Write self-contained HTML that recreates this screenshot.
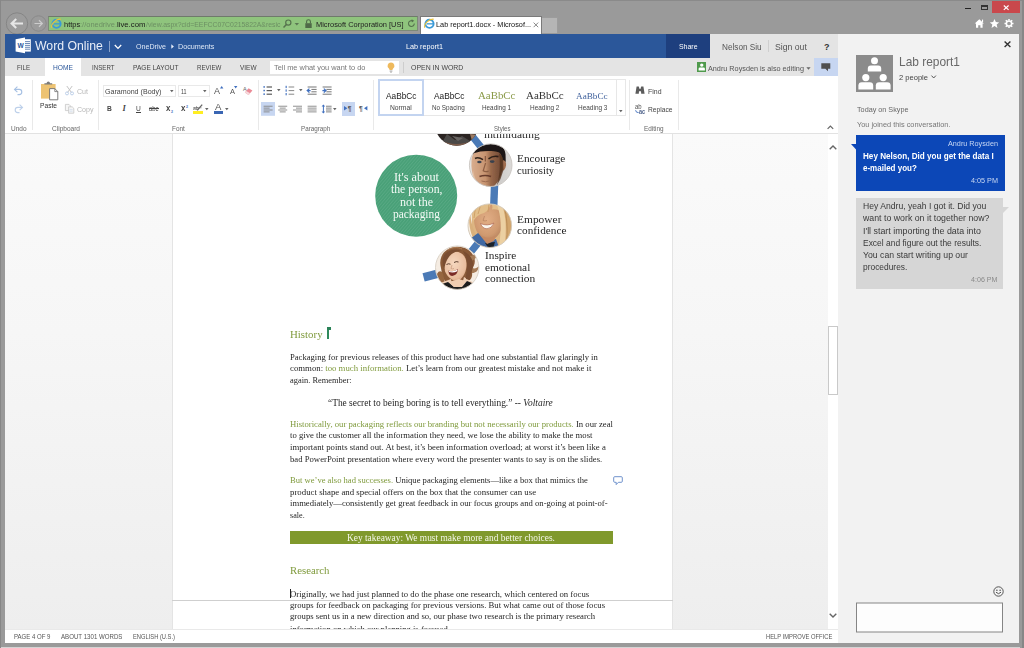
<!DOCTYPE html>
<html lang="en"><head><meta charset="utf-8"><title>Lab report1.docx - Microsoft Word Online</title>
<style>
*{margin:0;padding:0;box-sizing:border-box}
html,body{width:1024px;height:648px;overflow:hidden;background:#9a9a9a}
body{position:relative;font-family:"Liberation Sans",sans-serif}
.t{position:absolute;white-space:nowrap;transform-origin:0 50%;line-height:1;font-family:"Liberation Sans",sans-serif}
.f{font-family:"Liberation Serif",serif}
.r{position:absolute}
svg{position:absolute;overflow:visible}
</style></head><body>
<!-- browser chrome -->
<div class="r" style="left:0px;top:0px;width:1024px;height:648px;background:#9a9a9a;"></div>
<div class="r" style="left:0px;top:0px;width:1024px;height:1px;background:#8a8a8a;"></div>
<div class="r" style="left:0px;top:0px;width:1.2px;height:648px;background:#878787;"></div>
<div class="r" style="left:1022.4px;top:0px;width:1.6px;height:648px;background:#878787;"></div>
<div class="r" style="left:1.2px;top:646.9px;width:1019px;height:1.1px;background:#d4d4d4;"></div>
<svg style="left:5px;top:10px" width="46" height="27" viewBox="5 10 46 27"><circle cx="17" cy="23.5" r="10.7" fill="#9c9c9c" stroke="#828282" stroke-width="0.9"/><path d="M23 23.5H12M16.2 19l-4.6 4.5 4.6 4.5" fill="none" stroke="#e6e6e6" stroke-width="2.1"/><circle cx="38.5" cy="23.5" r="7.7" fill="#9b9b9b" stroke="#858585" stroke-width="0.8"/><path d="M34.5 23.5h7.6M39 20.3l3.3 3.2-3.3 3.2" fill="none" stroke="#cdcdcd" stroke-width="1.2"/></svg>
<div class="r" style="left:48px;top:16px;width:370px;height:15px;background:#8fc47d;border:1px solid #7d8a78;border-top-color:#6f7a6b"></div>
<svg style="left:51px;top:18px" width="11" height="11" viewBox="0 0 11 11"><circle cx="5.5" cy="5.8" r="4.1" fill="none" stroke="#3a9ad8" stroke-width="1.9"/><rect x="3" y="5.2" width="6.5" height="1.3" fill="#3a9ad8"/><path d="M0.8 9.8C-0.5 6 5 0.5 9.8 1.2" fill="none" stroke="#e9c13a" stroke-width="1.1"/></svg>
<div class="t" style="left:63.60px;top:21px;font-size:8px;color:#1a1a1a;transform:scaleX(0.9341);">https</div>
<div class="t" style="left:80.00px;top:21px;font-size:8px;color:#6c8f63;transform:scaleX(0.9349);">://onedrive.</div>
<div class="t" style="left:117.00px;top:21px;font-size:8px;color:#1a1a1a;transform:scaleX(0.9680);">live.com</div>
<div class="t" style="left:145.60px;top:21px;font-size:8px;color:#6c8f63;transform:scaleX(0.8574);">/view.aspx?cid=EEFCC07C0215822A&amp;resic</div>
<svg style="left:282px;top:18px" width="32" height="12" viewBox="282 18 32 12"><circle cx="288.3" cy="22.6" r="2.6" fill="none" stroke="#56724e" stroke-width="1.2"/><path d="M286.4 24.6l-2.9 3" stroke="#56724e" stroke-width="1.5"/><path d="M294.6 23h4.4l-2.2 2.4z" fill="#5b7853"/><rect x="305.3" y="23.2" width="6.4" height="4.8" fill="#4f6a48"/><path d="M306.6 23.2v-1.6a1.9 1.9 0 0 1 3.8 0v1.6" fill="none" stroke="#4f6a48" stroke-width="1.1"/></svg>
<div class="t" style="left:316.00px;top:21px;font-size:8px;color:#222;transform:scaleX(0.9283);">Microsoft Corporation [US]</div>
<svg style="left:407px;top:19px" width="9" height="9" viewBox="0 0 9 9"><path d="M7.3 4.6A2.9 2.9 0 1 1 5.6 1.9" fill="none" stroke="#56724e" stroke-width="1.1"/><path d="M4.6 0.2l2.6 1.6-2.3 1.7z" fill="#56724e"/></svg>
<div class="r" style="left:420px;top:16px;width:122px;height:18px;background:#ffffff;border:1px solid #7a7a7a;border-bottom:none"></div>
<svg style="left:424px;top:18px" width="11" height="11" viewBox="0 0 11 11"><circle cx="5.5" cy="5.8" r="4.1" fill="none" stroke="#3a9ad8" stroke-width="1.9"/><rect x="3" y="5.2" width="6.5" height="1.3" fill="#3a9ad8"/><path d="M0.8 9.8C-0.5 6 5 0.5 9.8 1.2" fill="none" stroke="#e9c13a" stroke-width="1.1"/></svg>
<div class="t" style="left:436.00px;top:21px;font-size:8px;color:#111;transform:scaleX(0.9131);">Lab report1.docx - Microsof...</div>
<svg style="left:533px;top:22px" width="6" height="6" viewBox="0 0 6 6"><path d="M0.6 0.6l4.6 4.6M5.2 0.6L0.6 5.2" stroke="#8a8a8a" stroke-width="1"/></svg>
<div class="r" style="left:542px;top:17.4px;width:15.8px;height:16.1px;background:#b5b5b5;border:1px solid #9c9c9c;border-left:none;border-bottom:none"></div>
<div class="r" style="left:965px;top:8px;width:5.5px;height:1.4px;background:#222;"></div>
<div class="r" style="left:981px;top:4.5px;width:6.5px;height:5px;background:transparent;border:1px solid #333;border-top-width:2px"></div>
<div class="r" style="left:992px;top:1px;width:28px;height:12px;background:#c9484c;"></div>
<svg style="left:1003px;top:4.5px" width="6.4" height="5.4" viewBox="0 0 6.4 5.4"><path d="M0.8 0.5l4.8 4.4M5.6 0.5L0.8 4.9" stroke="#fff" stroke-width="1.15"/></svg>
<svg style="left:974px;top:18px" width="42" height="11" viewBox="974 18 42 11"><path d="M979.3 19.2l4.6 4.4h-1.3v4.2h-2.2v-2.6h-2.2v2.6h-2.2v-4.2h-1.3z" fill="#fff"/><rect x="982" y="19.6" width="1.1" height="2.4" fill="#fff"/><path d="M994.5 19l1.35 3.1 3.35 0.3-2.55 2.2 0.8 3.3-2.95-1.8-2.95 1.8 0.8-3.3-2.55-2.2 3.35-0.3z" fill="#fff"/><circle cx="1009" cy="23.5" r="2.6" fill="none" stroke="#fff" stroke-width="1.5"/><g stroke="#fff" stroke-width="1.5"><path d="M1009 19v1.6M1009 26.4V28M1004.5 23.5h1.6M1011.9 23.5h1.6M1005.8 20.3l1.1 1.1M1011.1 25.6l1.1 1.1M1012.2 20.3l-1.1 1.1M1006.9 25.6l-1.1 1.1"/></g></svg>
<!-- app header -->
<div class="r" style="left:5px;top:33.5px;width:661px;height:24.3px;background:#2b579a;"></div>
<div class="r" style="left:666px;top:33.5px;width:44px;height:24.3px;background:#1e3f7e;"></div>
<div class="r" style="left:710px;top:33.5px;width:128px;height:24.5px;background:#e4e4e4;"></div>
<svg style="left:15px;top:37px" width="17" height="17" viewBox="0 0 17 17"><rect x="8" y="2.2" width="7.8" height="12.4" fill="#fff"/><g stroke="#2b579a" stroke-width="0.7"><path d="M10 4.6h5M10 6.5h5M10 8.4h5M10 10.3h5M10 12.2h5"/></g><path d="M0.6 2.2L10 0.6v15.6L0.6 14.6z" fill="#fff"/></svg>
<div class="t" style="left:17.40px;top:43px;font-size:6.6px;color:#2b579a;font-weight:bold;">W</div>
<div class="t" style="left:35.00px;top:40px;font-size:12.2px;color:#e9eef7;transform:scaleX(1.0062);">Word Online</div>
<div class="r" style="left:109px;top:40.5px;width:1px;height:11px;background:#8aa3cb;"></div>
<svg style="left:114px;top:43.5px" width="8" height="6" viewBox="0 0 8 6"><path d="M0.8 1l3.2 3.4L7.2 1" fill="none" stroke="#fff" stroke-width="1.3"/></svg>
<div class="t" style="left:136.00px;top:43px;font-size:7.6px;color:#dfe8f6;transform:scaleX(0.9346);">OneDrive</div>
<svg style="left:170.6px;top:44px" width="3.2" height="5" viewBox="0 0 3.2 5"><path d="M0.300 0.300L2.900 2.500 0.300 4.700z" fill="#e8eefa"/></svg>
<div class="t" style="left:177.50px;top:43px;font-size:7.6px;color:#dfe8f6;transform:scaleX(0.9496);">Documents</div>
<div class="t" style="left:406.00px;top:43px;font-size:7.6px;color:#fff;transform:scaleX(0.9518);">Lab report1</div>
<div class="t" style="left:679.00px;top:43px;font-size:7.8px;color:#fff;transform:scaleX(0.8888);">Share</div>
<div class="t" style="left:722.40px;top:43px;font-size:9px;color:#555;transform:scaleX(0.9098);">Nelson Siu</div>
<div class="r" style="left:768px;top:40px;width:1px;height:12px;background:#cfcfcf;"></div>
<div class="t" style="left:775.00px;top:43px;font-size:9px;color:#555;transform:scaleX(0.9629);">Sign out</div>
<div class="t" style="left:824.00px;top:43px;font-size:9px;color:#333;font-weight:bold;">?</div>
<!-- ribbon tabs -->
<div class="r" style="left:5px;top:57.8px;width:833px;height:18.2px;background:#e4e4e4;"></div>
<div class="r" style="left:45px;top:57.8px;width:36px;height:18.2px;background:#ffffff;"></div>
<div class="t" style="left:17.00px;top:64px;font-size:7.6px;color:#444;transform:scaleX(0.8100);">FILE</div>
<div class="t" style="left:53.00px;top:64px;font-size:7.6px;color:#2b579a;transform:scaleX(0.8772);">HOME</div>
<div class="t" style="left:91.50px;top:64px;font-size:7.6px;color:#444;transform:scaleX(0.8113);">INSERT</div>
<div class="t" style="left:132.50px;top:64px;font-size:7.6px;color:#444;transform:scaleX(0.8665);">PAGE LAYOUT</div>
<div class="t" style="left:196.60px;top:64px;font-size:7.6px;color:#444;transform:scaleX(0.8139);">REVIEW</div>
<div class="t" style="left:239.50px;top:64px;font-size:7.6px;color:#444;transform:scaleX(0.8495);">VIEW</div>
<div class="r" style="left:270px;top:61px;width:128.5px;height:12.5px;background:#ffffff;"></div>
<div class="t" style="left:273.50px;top:64px;font-size:7.6px;color:#777;transform:scaleX(0.9757);">Tell me what you want to do</div>
<svg style="left:386.5px;top:61.5px" width="8" height="11" viewBox="0 0 8 11"><path d="M4 0.4a3.4 3.4 0 0 1 2.1 6.1c-0.5 0.5-0.6 0.9-0.6 1.5h-3c0-0.6-0.1-1-0.6-1.5A3.4 3.4 0 0 1 4 0.4z" fill="#eeb95c"/><rect x="2.6" y="8.6" width="2.8" height="0.9" fill="#9a9a9a"/><rect x="3.1" y="9.8" width="1.8" height="0.7" fill="#9a9a9a"/></svg>
<div class="r" style="left:403px;top:62px;width:1px;height:10.5px;background:#cdcdcd;"></div>
<div class="t" style="left:410.60px;top:64px;font-size:7.6px;color:#444;transform:scaleX(0.9125);">OPEN IN WORD</div>
<div class="r" style="left:696.5px;top:62.2px;width:9.5px;height:9.8px;background:#4f9a4c;"></div>
<svg style="left:696.5px;top:62.2px" width="9.5" height="9.8" viewBox="0 0 9.5 9.8"><circle cx="4.75" cy="3.1" r="1.7" fill="#fff"/><path d="M1.6 8.6V6.8q0-1.4 1.4-1.4h3.5q1.4 0 1.4 1.4v1.8z" fill="#fff"/></svg>
<div class="t" style="left:708.00px;top:65px;font-size:7.6px;color:#555;transform:scaleX(0.9548);">Andru Roysden is also editing</div>
<svg style="left:806px;top:66.6px" width="5" height="3" viewBox="0 0 5 3"><path d="M0.4 0.3h4.2L2.5 2.7z" fill="#666"/></svg>
<div class="r" style="left:814px;top:57.8px;width:24px;height:18.2px;background:#c7d6f1;"></div>
<svg style="left:821px;top:63px" width="10" height="9" viewBox="0 0 10 9"><path d="M0.3 0.3h9v5.4H7v2.6L4.4 5.7H0.3z" fill="#505050"/></svg>
<!-- ribbon body -->
<div class="r" style="left:5px;top:76px;width:833px;height:57px;background:#ffffff;"></div>
<div class="r" style="left:5px;top:133px;width:833px;height:1px;background:#e2e2e2;"></div>
<div class="r" style="left:32px;top:80px;width:1px;height:50px;background:#e9e9e9;"></div>
<div class="r" style="left:98px;top:80px;width:1px;height:50px;background:#e9e9e9;"></div>
<div class="r" style="left:257.5px;top:80px;width:1px;height:50px;background:#e9e9e9;"></div>
<div class="r" style="left:373px;top:80px;width:1px;height:50px;background:#e9e9e9;"></div>
<div class="r" style="left:629.4px;top:80px;width:1px;height:50px;background:#e9e9e9;"></div>
<div class="r" style="left:678.2px;top:80px;width:1px;height:50px;background:#e9e9e9;"></div>
<div class="t" style="left:10.50px;top:126px;font-size:6.8px;color:#666;transform:scaleX(0.9535);">Undo</div>
<div class="t" style="left:51.50px;top:126px;font-size:6.8px;color:#666;transform:scaleX(0.9620);">Clipboard</div>
<div class="t" style="left:172.00px;top:126px;font-size:6.8px;color:#666;transform:scaleX(0.9407);">Font</div>
<div class="t" style="left:300.70px;top:126px;font-size:6.8px;color:#666;transform:scaleX(0.9227);">Paragraph</div>
<div class="t" style="left:493.50px;top:126px;font-size:6.8px;color:#666;transform:scaleX(0.8911);">Styles</div>
<div class="t" style="left:644.00px;top:126px;font-size:6.8px;color:#666;transform:scaleX(0.9427);">Editing</div>
<svg style="left:13px;top:85px" width="11" height="28" viewBox="13 85 11 28"><path d="M15 89.4h4.2a2.6 2.6 0 0 1 0 5.2H17.5" fill="none" stroke="#a6c0e3" stroke-width="1.1"/><path d="M17.4 86.6l-2.9 2.8 2.9 2.8" fill="none" stroke="#a6c0e3" stroke-width="1.1"/><path d="M22 107.4h-4.2a2.6 2.6 0 0 0 0 5.2H19.5" fill="none" stroke="#bdd0ea" stroke-width="1.1"/><path d="M19.6 104.6l2.9 2.8-2.9 2.8" fill="none" stroke="#bdd0ea" stroke-width="1.1"/></svg>
<svg style="left:40px;top:81px" width="19" height="20" viewBox="40 81 19 20"><rect x="41" y="84" width="14.6" height="14.6" fill="#edc373"/><path d="M44.4 84.6h7.8v-1.4h-2.2a1.7 1.7 0 0 0-3.4 0h-2.2z" fill="#7b7b7b"/><path d="M49.6 88.6h5.2l3 3v8.2h-8.2z" fill="#fff" stroke="#6e6e6e" stroke-width="0.9"/><path d="M54.8 88.6v3h3" fill="none" stroke="#6e6e6e" stroke-width="0.8"/></svg>
<div class="t" style="left:40.00px;top:102px;font-size:8px;color:#333;transform:scaleX(0.8310);">Paste</div>
<svg style="left:64px;top:85px" width="11" height="30" viewBox="64 85 11 30"><path d="M66.8 86l4.6 6.4M72.2 86l-4.6 6.4" stroke="#c4c4c4" stroke-width="1"/><circle cx="67" cy="93.4" r="1.5" fill="none" stroke="#b7cbe6" stroke-width="0.9"/><circle cx="72" cy="93.4" r="1.5" fill="none" stroke="#b7cbe6" stroke-width="0.9"/><path d="M65.4 104.4h3.6l1.6 1.6v4.6h-5.2z" fill="#f6f6f6" stroke="#c6c6c6" stroke-width="0.8"/><path d="M68.6 106.8h3.6l1.6 1.6v4.8h-5.2z" fill="#f6f6f6" stroke="#c6c6c6" stroke-width="0.8"/><path d="M69.6 109.6h3M69.6 111.2h3" stroke="#c4d4ea" stroke-width="0.6"/></svg>
<div class="t" style="left:76.50px;top:88px;font-size:8px;color:#b8b8b8;transform:scaleX(0.8836);">Cut</div>
<div class="t" style="left:76.50px;top:106px;font-size:8px;color:#b8b8b8;transform:scaleX(0.8835);">Copy</div>
<div class="r" style="left:103px;top:84.5px;width:72.5px;height:12.5px;background:#fff;border:1px solid #e9e9e9"></div>
<div class="r" style="left:177.5px;top:84.5px;width:32px;height:12.5px;background:#fff;border:1px solid #e9e9e9"></div>
<div class="t" style="left:105.00px;top:88px;font-size:7.8px;color:#444;transform:scaleX(0.9114);">Garamond (Body)</div>
<div class="t" style="left:180.50px;top:88px;font-size:7.8px;color:#444;transform:scaleX(0.6916);">11</div>
<svg style="left:169.6px;top:90.3px" width="3.6" height="2.2" viewBox="0 0 3.6 2.2"><path d="M0 0h3.6L1.8 2.2z" fill="#666"/></svg>
<svg style="left:202.8px;top:90.3px" width="3.6" height="2.2" viewBox="0 0 3.6 2.2"><path d="M0 0h3.6L1.8 2.2z" fill="#666"/></svg>
<div class="t" style="left:214.20px;top:87px;font-size:8.6px;color:#555;transform:scaleX(1.0460);">A</div>
<svg style="left:219.6px;top:85.6px" width="3.4" height="2.4" viewBox="0 0 3.4 2.4"><path d="M0 2.4h3.4L1.7 0z" fill="#3f6fbf"/></svg>
<div class="t" style="left:229.60px;top:88px;font-size:7.2px;color:#555;transform:scaleX(1.0411);">A</div>
<svg style="left:233.8px;top:86px" width="3.4" height="2.4" viewBox="0 0 3.4 2.4"><path d="M0 0h3.4L1.7 2.4z" fill="#3f6fbf"/></svg>
<div class="t" style="left:243.00px;top:87px;font-size:5.6px;color:#666;">A</div>
<svg style="left:243px;top:87px" width="10" height="9" viewBox="0 0 10 9"><path d="M5.6 1.2L9.4 3.6 5.6 8 1.8 5.6z" fill="#ea8a96"/><path d="M1.8 5.6l1.5-1.7 3.8 2.4L5.6 8z" fill="#f6d9dc"/></svg>
<div class="t" style="left:107.00px;top:105px;font-size:8px;color:#444;font-weight:bold;transform:scaleX(0.8308);">B</div>
<div class="t f" style="left:122.60px;top:105px;font-size:8.4px;color:#444;font-weight:bold;font-style:italic;">I</div>
<div class="t" style="left:136.20px;top:105px;font-size:8px;color:#444;transform:scaleX(0.8308);">U</div>
<div class="r" style="left:136px;top:112px;width:5.4px;height:0.9px;background:#444;"></div>
<div class="t" style="left:149.00px;top:105px;font-size:7.2px;color:#444;transform:scaleX(0.8270);">abc</div>
<div class="r" style="left:148.6px;top:108.4px;width:10.4px;height:0.8px;background:#444;"></div>
<div class="t" style="left:165.60px;top:104px;font-size:8.6px;color:#444;font-weight:bold;transform:scaleX(0.9199);">x</div>
<div class="t" style="left:171.00px;top:111px;font-size:3.6px;color:#3f6fbf;font-weight:bold;">2</div>
<div class="t" style="left:180.60px;top:104px;font-size:8.6px;color:#444;font-weight:bold;transform:scaleX(0.9199);">x</div>
<div class="t" style="left:186.00px;top:106px;font-size:3.6px;color:#3f6fbf;font-weight:bold;">2</div>
<div class="t" style="left:193.40px;top:105px;font-size:6px;color:#555;transform:scaleX(0.8391);">ab</div>
<svg style="left:193px;top:104px" width="10" height="7" viewBox="0 0 10 7"><path d="M9.2 0.6L4.2 6.4" stroke="#666" stroke-width="1.3"/><path d="M0.6 3.8h8" stroke="#666" stroke-width="0.6"/></svg>
<div class="r" style="left:193px;top:111px;width:9.6px;height:2.8px;background:#ffee22;"></div>
<svg style="left:204.6px;top:108.2px" width="3.6" height="2.2" viewBox="0 0 3.6 2.2"><path d="M0 0h3.6L1.8 2.2z" fill="#666"/></svg>
<div class="t" style="left:214.60px;top:103px;font-size:9px;color:#555;transform:scaleX(1.0661);">A</div>
<div class="r" style="left:213.8px;top:111.4px;width:9.6px;height:2.4px;background:#3a66b3;"></div>
<svg style="left:225.4px;top:108.2px" width="3.6" height="2.2" viewBox="0 0 3.6 2.2"><path d="M0 0h3.6L1.8 2.2z" fill="#666"/></svg>
<svg style="left:262px;top:84px" width="74" height="34" viewBox="262 84 74 34"><rect x="263.4" y="86.2" width="1.5" height="1.5" fill="#3f6fbf"/><rect x="266.6" y="86.4" width="5.4" height="1.2" fill="#5a5a5a"/><rect x="263.4" y="89.8" width="1.5" height="1.5" fill="#3f6fbf"/><rect x="266.6" y="90.0" width="5.4" height="1.2" fill="#5a5a5a"/><rect x="263.4" y="93.4" width="1.5" height="1.5" fill="#3f6fbf"/><rect x="266.6" y="93.60000000000001" width="5.4" height="1.2" fill="#5a5a5a"/><rect x="285.6" y="85.8" width="1.1" height="2.3" fill="#3f6fbf"/><rect x="288.6" y="86.5" width="5.6" height="1" fill="#888"/><rect x="285.6" y="89.39999999999999" width="1.1" height="2.3" fill="#3f6fbf"/><rect x="288.6" y="90.1" width="5.6" height="1" fill="#888"/><rect x="285.6" y="93.0" width="1.1" height="2.3" fill="#3f6fbf"/><rect x="288.6" y="93.7" width="5.6" height="1" fill="#888"/><rect x="307.6" y="86.5" width="9.0" height="1" fill="#777"/><rect x="311.4" y="88.9" width="5.2000000000000455" height="1" fill="#777"/><rect x="311.4" y="91.3" width="5.2000000000000455" height="1" fill="#777"/><rect x="307.6" y="93.7" width="9.0" height="1" fill="#777"/><path d="M310.6 90.6h-3.2M309.4 88.6l-2.2 2 2.2 2" fill="none" stroke="#3f6fbf" stroke-width="1.2"/><rect x="322.6" y="86.5" width="9.0" height="1" fill="#777"/><rect x="326.4" y="88.9" width="5.2000000000000455" height="1" fill="#777"/><rect x="326.4" y="91.3" width="5.2000000000000455" height="1" fill="#777"/><rect x="322.6" y="93.7" width="9.0" height="1" fill="#777"/><path d="M322.4 90.6h3.2M323.8 88.6l2.2 2-2.2 2" fill="none" stroke="#3f6fbf" stroke-width="1.2"/><rect x="261" y="102" width="14" height="13.8" fill="#c7d6f1"/><rect x="263.6" y="105.75" width="9" height="0.9" fill="#858585"/><rect x="263.6" y="107.65" width="6" height="0.9" fill="#858585"/><rect x="263.6" y="109.55" width="9" height="0.9" fill="#858585"/><rect x="263.6" y="111.45" width="6" height="0.9" fill="#858585"/><rect x="278.2" y="105.75" width="9" height="0.9" fill="#858585"/><rect x="279.7" y="107.65" width="6" height="0.9" fill="#858585"/><rect x="278.2" y="109.55" width="9" height="0.9" fill="#858585"/><rect x="279.7" y="111.45" width="6" height="0.9" fill="#858585"/><rect x="293" y="105.75" width="9" height="0.9" fill="#858585"/><rect x="296" y="107.65" width="6" height="0.9" fill="#858585"/><rect x="293" y="109.55" width="9" height="0.9" fill="#858585"/><rect x="296" y="111.45" width="6" height="0.9" fill="#858585"/><rect x="307.6" y="105.75" width="9" height="0.9" fill="#858585"/><rect x="307.6" y="107.65" width="9" height="0.9" fill="#858585"/><rect x="307.6" y="109.55" width="9" height="0.9" fill="#858585"/><rect x="307.6" y="111.45" width="9" height="0.9" fill="#858585"/><rect x="326" y="105.75" width="5.6" height="0.9" fill="#777"/><rect x="326" y="107.65" width="5.6" height="0.9" fill="#777"/><rect x="326" y="109.55" width="5.6" height="0.9" fill="#777"/><rect x="326" y="111.45" width="5.6" height="0.9" fill="#777"/><path d="M323.4 105.2v7.6" stroke="#3f6fbf" stroke-width="1"/><path d="M321.6 106.6l1.8-2 1.8 2zM321.6 111.4l1.8 2 1.8-2z" fill="#3f6fbf"/></svg>
<svg style="left:276.6px;top:89.4px" width="3.6" height="2.2" viewBox="0 0 3.6 2.2"><path d="M0 0h3.6L1.8 2.2z" fill="#666"/></svg>
<svg style="left:298.6px;top:89.4px" width="3.6" height="2.2" viewBox="0 0 3.6 2.2"><path d="M0 0h3.6L1.8 2.2z" fill="#666"/></svg>
<svg style="left:333.4px;top:107.6px" width="3.6" height="2.2" viewBox="0 0 3.6 2.2"><path d="M0 0h3.6L1.8 2.2z" fill="#666"/></svg>
<div class="r" style="left:342px;top:102px;width:13px;height:13.8px;background:#c7d6f1;"></div>
<div class="t" style="left:347.80px;top:106px;font-size:6.6px;color:#555;font-weight:bold;">¶</div>
<svg style="left:344px;top:106.4px" width="3.4" height="4.6" viewBox="0 0 3.4 4.6"><path d="M0 0l3.4 2.3L0 4.6z" fill="#3f6fbf"/></svg>
<div class="t" style="left:359.00px;top:106px;font-size:6.6px;color:#555;font-weight:bold;">¶</div>
<svg style="left:363.6px;top:106.4px" width="3.4" height="4.6" viewBox="0 0 3.4 4.6"><path d="M3.4 0L0 2.3l3.4 2.3z" fill="#3f6fbf"/></svg>
<div class="r" style="left:377.5px;top:79.2px;width:248.5px;height:37.2px;background:#fff;border:1px solid #e7e7e7"></div>
<div class="r" style="left:616.4px;top:79.2px;width:1px;height:37.2px;background:#e7e7e7;"></div>
<div class="r" style="left:377.5px;top:79.2px;width:46.5px;height:37.2px;background:#fff;border:2px solid #c3d4f0"></div>
<svg style="left:618.8px;top:110px" width="3.6" height="2.2" viewBox="0 0 3.6 2.2"><path d="M0 0h3.6L1.8 2.2z" fill="#666"/></svg>
<div class="t" style="left:386.00px;top:92px;font-size:9.2px;color:#222;transform:scaleX(0.9037);">AaBbCc</div>
<div class="t" style="left:390.20px;top:104px;font-size:7.4px;color:#444;transform:scaleX(0.9099);">Normal</div>
<div class="t" style="left:433.50px;top:92px;font-size:9.2px;color:#222;transform:scaleX(0.9037);">AaBbCc</div>
<div class="t" style="left:432.20px;top:104px;font-size:7.4px;color:#444;transform:scaleX(0.8573);">No Spacing</div>
<div class="t f" style="left:478.00px;top:90px;font-size:11px;color:#8a9a48;transform:scaleX(0.9873);">AaBbCc</div>
<div class="t" style="left:482.00px;top:104px;font-size:7.4px;color:#444;transform:scaleX(0.8596);">Heading 1</div>
<div class="t f" style="left:525.50px;top:90px;font-size:11px;color:#333;transform:scaleX(0.9952);">AaBbCc</div>
<div class="t" style="left:529.70px;top:104px;font-size:7.4px;color:#444;transform:scaleX(0.8744);">Heading 2</div>
<div class="t f" style="left:576.40px;top:92px;font-size:9px;color:#3d5f9b;transform:scaleX(1.0195);">AaBbCc</div>
<div class="t" style="left:577.50px;top:104px;font-size:7.4px;color:#444;transform:scaleX(0.8744);">Heading 3</div>
<svg style="left:634px;top:85px" width="12" height="29" viewBox="634 85 12 29"><path d="M636.6 86.6h2.2l0.8 2.4h0.8l0.8-2.4h2.2l1.2 7.2h-3.4l-0.2-2.6h-2l-0.2 2.6h-3.4z" fill="#5c5c5c"/><path d="M635.600 110.200q0.200 2.600 3 2.400" fill="none" stroke="#3f6fbf" stroke-width="0.9"/></svg>
<div class="t" style="left:634.80px;top:104px;font-size:6.8px;color:#505050;transform:scaleX(0.8726);">ab</div>
<div class="t" style="left:639.40px;top:109px;font-size:6.8px;color:#50648c;font-weight:bold;transform:scaleX(0.8197);">ac</div>
<div class="t" style="left:647.50px;top:88px;font-size:8px;color:#444;transform:scaleX(0.8675);">Find</div>
<div class="t" style="left:647.50px;top:106px;font-size:8px;color:#444;transform:scaleX(0.8347);">Replace</div>
<svg style="left:827px;top:124.5px" width="7" height="4.5" viewBox="0 0 7 4.5"><path d="M0.6 3.8L3.4 1l2.8 2.8" fill="none" stroke="#666" stroke-width="1.2"/></svg>
<!-- document canvas -->
<div class="r" style="left:5px;top:134px;width:833px;height:496px;background:linear-gradient(#fafafa,#f6f6f6 40%,#eeeeee);"></div>
<div class="r" style="left:172px;top:134px;width:500.5px;height:466px;background:#ffffff;border-left:1px solid #e4e4e4;border-right:1px solid #e4e4e4"></div>
<div class="r" style="left:172px;top:600px;width:500.5px;height:1px;background:#cfcfcf;"></div>
<div class="r" style="left:172px;top:601px;width:500.5px;height:28.5px;background:#ffffff;border-left:1px solid #e4e4e4;border-right:1px solid #e4e4e4"></div>
<div class="r" style="left:827.5px;top:134px;width:10.5px;height:495.5px;background:#ffffff;"></div>
<div class="r" style="left:827.5px;top:325.5px;width:10.5px;height:69.5px;background:#ffffff;border:1px solid #c9c9c9"></div>
<svg style="left:828.5px;top:144.6px" width="8" height="5" viewBox="0 0 8 5"><path d="M0.7 4.3L4 1l3.3 3.3" fill="none" stroke="#666" stroke-width="1.4"/></svg>
<svg style="left:828.5px;top:613px" width="8" height="5" viewBox="0 0 8 5"><path d="M0.7 0.7L4 4l3.3-3.3" fill="none" stroke="#666" stroke-width="1.4"/></svg>
<div class="r" style="left:173px;top:134px;width:499px;height:495px;overflow:hidden">
<svg style="left:0;top:0" width="499" height="494" viewBox="173 134 499 494"><defs><pattern id="hatch" width="2.4" height="2.4" patternUnits="userSpaceOnUse" patternTransform="rotate(-50)"><rect width="2.4" height="2.4" fill="#48a077"/><rect width="2.4" height="0.9" fill="#58a984"/></pattern><clipPath id="c0"><circle cx="456.7" cy="123.8" r="21.9"/></clipPath><clipPath id="c1"><circle cx="490.7" cy="165.2" r="21.3"/></clipPath><clipPath id="c2"><circle cx="489.8" cy="225.7" r="21.8"/></clipPath><clipPath id="c3"><circle cx="457.2" cy="267.7" r="21.7"/></clipPath><filter id="bl" x="-10%" y="-10%" width="120%" height="120%"><feGaussianBlur stdDeviation="0.7"/></filter><filter id="bl2" x="-10%" y="-10%" width="120%" height="120%"><feGaussianBlur stdDeviation="1.1"/></filter><linearGradient id="man" x1="0" x2="1"><stop offset="0" stop-color="#d8ad8e"/><stop offset="0.45" stop-color="#c79470"/><stop offset="0.62" stop-color="#9a6a4c"/><stop offset="1" stop-color="#6b4430"/></linearGradient><linearGradient id="bg1" x1="0" x2="1"><stop offset="0" stop-color="#e8e6e4"/><stop offset="0.7" stop-color="#cfcdcb"/><stop offset="1" stop-color="#dddbd9"/></linearGradient><radialGradient id="blonde" cx="0.45" cy="0.45" r="0.6"><stop offset="0" stop-color="#e2ae86"/><stop offset="0.7" stop-color="#d09a70"/><stop offset="1" stop-color="#b98560"/></radialGradient><radialGradient id="laugh" cx="0.45" cy="0.4" r="0.65"><stop offset="0" stop-color="#f6d8bf"/><stop offset="0.8" stop-color="#e9bd9e"/><stop offset="1" stop-color="#d4a283"/></radialGradient></defs><g stroke="#4b7ab6" fill="none"><path d="M469 132L482.500 149" stroke-width="7"/><path d="M494.6 184L493.7 207" stroke-width="7.4"/><path d="M480.500 240L468.500 255" stroke-width="7"/><path d="M439 273.300L423.600 277.300" stroke-width="8.600"/></g><circle cx="416.2" cy="195.7" r="41" fill="url(#hatch)"/><g clip-path="url(#c0)"><rect x="434" y="100" width="46" height="46" fill="#2b2422"/><g filter="url(#bl)"><path d="M447 134l8 6 7-4 8 5 6-7v12h-36z" fill="#4c4846"/><path d="M452 136l6 5 5-3z" fill="#6a6664"/><path d="M440 140q16 8 34 0l2 8h-40z" fill="#7d5c4a"/><path d="M470 134l8 1v10l-5-1z" fill="#9b7a62"/></g></g><g clip-path="url(#c1)"><rect x="468" y="143" width="46" height="46" fill="url(#bg1)"/><g filter="url(#bl)"><path d="M473 153c1-7 8-11 16-11 9 0 15.500 4 16.500 12l0 8-3 3-27-3z" fill="#1e1714"/><path d="M502 160.500c3-1 4.500 2 4 5-0.500 3-2 5.500-4.500 5.500z" fill="#a06e50"/><path d="M471.500 161c0-8 5-12.500 15-12.500s16 3.500 16 12.500c0.500 7-0.500 13-3.500 18.500-2 4-5.500 9-12 9s-10.500-4.500-12.500-9c-2.500-5.500-3.500-11.500-3-18.500z" fill="url(#man)"/><path d="M473 153.500c2-5.500 8-9 15-9 8 0 14.500 2.500 17 8.500l0.500 9c-1.500-4.500-3.500-8-6-9.500-8-2.200-18-2-26.500 1z" fill="#1e1714"/><path d="M499 153l4 5 0.500 12-3 9-4 7c3-9 4.500-21 2.500-33z" fill="#54331f" opacity="0.8"/><path d="M473 170c1 6 3 11 6 14l-3-1c-3-4-4-8-3-13z" fill="#e6c4a8" opacity="0.700"/></g><g filter="url(#bl)" opacity="0.950"><path d="M475 158.400q3.500-1.600 8 1.200M488.500 158.800q4.500-3.400 10-2.200" stroke="#2a1c15" stroke-width="1.600" fill="none"/><ellipse cx="479.400" cy="162" rx="2.200" ry="1.250" fill="#34404f"/><ellipse cx="492.200" cy="161.600" rx="2.400" ry="1.350" fill="#34404f"/><path d="M485.300 156v5.500" stroke="#7a4f38" stroke-width="1.100"/><path d="M485.600 163l-2.400 7.800q2.200 1.600 5.400 0.300" stroke="#8a5c42" stroke-width="1.200" fill="none"/><path d="M479.500 176.600q5.500-2.200 11.500 0" stroke="#64382a" stroke-width="1.600" fill="none"/><path d="M481.500 181q4 1.500 8 0" stroke="#9a6a50" stroke-width="1" fill="none"/></g></g><circle cx="490.7" cy="165.2" r="21.300" fill="none" stroke="#c9c5c1" stroke-width="0.9"/><g clip-path="url(#c2)"><rect x="467" y="203" width="46" height="46" fill="#f4eadb"/><g filter="url(#bl)"><path d="M472 203h38l3 46h-12l-22-4-7-6 0-26z" fill="#ddb582"/><path d="M474 203h25l4 16c0 12-6 21-14 21s-15-9-15-21z" fill="url(#blonde)"/><path d="M471 203h32l-1 9c-3-2-6-3-10-2.500 1-3 0-5-1-6.500-1 4-3 8-7 10-4 1-8 3-11 9z" fill="#e3bf8a"/><path d="M476 204l-2 14M481 204l-3 10M489 204l-1 8" stroke="#c99a62" stroke-width="0.800" fill="none"/><path d="M500 204c5 8 8 20 7 44h6v-44z" fill="#d2a56c"/><path d="M497 205c4 10 5 24 2 40l5 1c3-14 2-30-2-42z" fill="#ecd0a2"/><path d="M504 206c3 10 4 24 2 40" stroke="#b88a55" stroke-width="0.900" fill="none"/><path d="M467 206c2 14 4 24 9 32l-9 8z" fill="#f6ecdd"/><path d="M470 212c1 10 3 18 7 25l-3 3c-4-8-6-18-4-28z" fill="#d9b07c"/><path d="M470 239l8-6 9 9 9-3 4 11h-30z" fill="#4068a2"/><path d="M485 243l4 6h4l2-7z" fill="#1f232b"/><path d="M479 234q9 7 17 1l-2 6-7 3z" fill="#c58a64"/></g><path d="M480.500 223.500q6.500 3 13.500-0.500q-2.500 5.800-7 5.800t-6.500-5.300z" fill="#fbf6ee" stroke="#b06a55" stroke-width="0.700" filter="url(#bl)"/><path d="M484.500 216l-1.500 4.500q2 1 4 0" stroke="#b98562" stroke-width="0.800" fill="none" filter="url(#bl)"/></g><circle cx="489.8" cy="225.7" r="21.800" fill="none" stroke="#d2c8ba" stroke-width="0.9"/><g clip-path="url(#c3)"><rect x="434" y="245" width="46" height="46" fill="#f5ece2"/><g filter="url(#bl)"><path d="M441 268c-3-10 3-20 14-21 9-1 16 3 19 10 2 5 0 9-2 12 0 4 1 8-2 11l-24 2c-4-4-4-9-5-14z" fill="#8a5a38"/><path d="M437 274c2-4 5-3 6 0l2 9-7 3z" fill="#96663f"/><path d="M469 256c3 0 7-2 9-5-1 6-3 9-7 10zM472 268c3 1 5 0 7-2-1 5-3 7-7 7z" fill="#a67b58"/><path d="M443.500 266c-1-8.500 4-14 10.500-14.500s12 4 12.500 11.500-3 16-9 17.500-13-6-14-14.500z" fill="url(#laugh)"/><path d="M451 279l1 6 10 0 2-8 13 8v8h-42v-8z" fill="#eecdb3"/><path d="M436 286l12-4 6 5 8 0 5-6 12 5v8h-43z" fill="#1c1c1f"/><path d="M449 282l5 5 7 0 4-6-6-2z" fill="#efccb0"/><path d="M463 251c7 3 11 9 10 16-1 5-4 8-3 13l-4-1c0-9 4-15-3-28z" fill="#7a4e30"/><path d="M443 258c2-7 10-10 19-7-7 0-12 3-15 9-2 4-3 8-2 12-2-4-3-9-2-14z" fill="#7a4e30"/><path d="M448 250c4-3 10-3 14-1" stroke="#b08058" stroke-width="1" fill="none"/></g><g filter="url(#bl)"><path d="M448.500 270.500q4.500 2 9.500-1.500q-0.500 6-5 6.800t-4.500-5.300z" fill="#7a2c28"/><path d="M449 270.700q4.500 1.600 8.500-1.200l-0.300 1.800q-4 2-8 0.800z" fill="#fff"/><path d="M446.500 264.500q2-1.300 4-0.300M454 262.500q2.200-1.500 4.500-0.500" stroke="#4a2f20" stroke-width="0.900" fill="none"/><path d="M452 265l-1 3.500q1.500 0.800 3 0" stroke="#c79a7c" stroke-width="0.700" fill="none"/></g></g><circle cx="457.2" cy="267.7" r="21.700" fill="none" stroke="#d8cfc4" stroke-width="0.9"/></svg>
</div>
<div class="t f" style="left:394.00px;top:171px;font-size:12.4px;color:#f3faf6;transform:scaleX(0.9938);">It&#x27;s about</div>
<div class="t f" style="left:391.00px;top:183px;font-size:12.4px;color:#f3faf6;transform:scaleX(0.9466);">the person,</div>
<div class="t f" style="left:400.00px;top:196px;font-size:12.4px;color:#f3faf6;transform:scaleX(0.9679);">not the</div>
<div class="t f" style="left:393.00px;top:208px;font-size:12.4px;color:#f3faf6;transform:scaleX(0.9224);">packaging</div>
<div class="r" style="left:173px;top:134px;width:499px;height:20px;overflow:hidden"><div class="t f" style="left:310.70px;top:-4px;font-size:10.6px;color:#1e1e1e;transform:scaleX(1.0749);">intimidating</div>
</div>
<div class="t f" style="left:516.80px;top:154px;font-size:10.6px;color:#1e1e1e;transform:scaleX(1.0680);">Encourage</div>
<div class="t f" style="left:516.80px;top:166px;font-size:10.6px;color:#1e1e1e;transform:scaleX(1.0028);">curiosity</div>
<div class="t f" style="left:517.00px;top:215px;font-size:10.6px;color:#1e1e1e;transform:scaleX(1.0798);">Empower</div>
<div class="t f" style="left:517.00px;top:226px;font-size:10.6px;color:#1e1e1e;transform:scaleX(1.0647);">confidence</div>
<div class="t f" style="left:484.70px;top:251px;font-size:10.6px;color:#1e1e1e;transform:scaleX(1.0634);">Inspire</div>
<div class="t f" style="left:484.70px;top:263px;font-size:10.6px;color:#1e1e1e;transform:scaleX(1.0687);">emotional</div>
<div class="t f" style="left:484.70px;top:274px;font-size:10.6px;color:#1e1e1e;transform:scaleX(1.0816);">connection</div>
<div class="t f" style="left:290.20px;top:329px;font-size:11.2px;color:#7f9a3c;transform:scaleX(0.9702);">History</div>
<div class="r" style="left:327px;top:327px;width:1.6px;height:11.6px;background:#2f8a5c;"></div>
<div class="r" style="left:327px;top:326.7px;width:4px;height:3.8px;background:#2a8257;"></div>
<div class="t f" style="left:290.00px;top:353px;font-size:9.1px;color:#262626;transform:scaleX(0.9470);">Packaging for previous releases of this product have had one substantial flaw glaringly in</div>
<div class="t f" style="left:290.00px;top:364px;font-size:9.1px;color:#262626;transform:scaleX(0.9625);">common: <span style="color:#7f9a3c;">too much information.</span> Let’s learn from our greatest mistake and not make it</div>
<div class="t f" style="left:290.00px;top:376px;font-size:9.1px;color:#262626;transform:scaleX(0.9234);">again. Remember:</div>
<div class="t f" style="left:328.20px;top:398px;font-size:10.3px;color:#262626;transform:scaleX(0.9121);">“The secret to being boring is to tell everything.” -- <span style="font-style:italic;">Voltaire</span></div>
<div class="t f" style="left:290.00px;top:420px;font-size:9.1px;color:#262626;transform:scaleX(0.9540);"><span style="color:#7f9a3c;">Historically, our packaging reflects our branding but not necessarily our products.</span> In our zeal</div>
<div class="t f" style="left:290.00px;top:431px;font-size:9.1px;color:#262626;transform:scaleX(0.9544);">to give the customer all the information they need, we lose the ability to make the most</div>
<div class="t f" style="left:290.00px;top:443px;font-size:9.1px;color:#262626;transform:scaleX(0.9610);">important points stand out. At best, it’s been information overload; at worst it’s been like a</div>
<div class="t f" style="left:290.00px;top:455px;font-size:9.1px;color:#262626;transform:scaleX(0.9546);">bad PowerPoint presentation where every word the presenter wants to say is on the slides.</div>
<div class="t f" style="left:290.00px;top:476px;font-size:9.1px;color:#262626;transform:scaleX(0.9426);"><span style="color:#7f9a3c;">But we’ve also had successes.</span> Unique packaging elements—like a box that mimics the</div>
<div class="t f" style="left:290.00px;top:488px;font-size:9.1px;color:#262626;transform:scaleX(0.9695);">product shape and special offers on the box that the consumer can use</div>
<div class="t f" style="left:290.00px;top:499px;font-size:9.1px;color:#262626;transform:scaleX(0.9520);">immediately—consistently get great feedback in our focus groups and on-going at point-of-</div>
<div class="t f" style="left:290.00px;top:511px;font-size:9.1px;color:#262626;transform:scaleX(0.8951);">sale.</div>
<svg style="left:612.5px;top:475.5px" width="10" height="9.500" viewBox="0 0 10 9.500"><path d="M1.700 0.700h6.600q1 0 1 1v3.600q0 1-1 1H5.400L3.200 8.600V6.300H1.700q-1 0-1-1V1.700q0-1 1-1z" fill="#fff" stroke="#5f86c6" stroke-width="0.9"/></svg>
<div class="r" style="left:290px;top:531.2px;width:323.3px;height:12.8px;background:#80992c;"></div>
<div class="t f" style="left:346.60px;top:533px;font-size:9.8px;color:#f4f7e8;transform:scaleX(0.9585);">Key takeaway: We must make more and better choices.</div>
<div class="t f" style="left:290.20px;top:565px;font-size:11.2px;color:#7f9a3c;transform:scaleX(0.9624);">Research</div>
<div class="r" style="left:290.2px;top:589px;width:0.9px;height:9.4px;background:#222;"></div>
<div class="t f" style="left:290.00px;top:590px;font-size:9.1px;color:#262626;transform:scaleX(0.9589);">Originally, we had just planned to do the phase one research, which centered on focus</div>
<div class="t f" style="left:290.00px;top:601px;font-size:9.1px;color:#262626;transform:scaleX(0.9575);">groups for feedback on packaging for previous versions. But what came out of those focus</div>
<div class="t f" style="left:290.00px;top:612px;font-size:9.1px;color:#262626;transform:scaleX(0.9563);">groups sent us in a new direction and so, our phase two research is the primary research</div>
<div class="r" style="left:173px;top:620px;width:499px;height:9.3px;overflow:hidden"><div class="t f" style="left:117.00px;top:5px;font-size:9.1px;color:#262626;transform:scaleX(0.9491);">information on which our planning is focused.</div>
</div>
<!-- status bar -->
<div class="r" style="left:5px;top:629.5px;width:833px;height:13.6px;background:#ffffff;"></div>
<div class="r" style="left:5px;top:629px;width:833px;height:0.8px;background:#e9e9e9;"></div>
<div class="t" style="left:13.50px;top:634px;font-size:6.6px;color:#555;transform:scaleX(0.9158);">PAGE 4 OF 9</div>
<div class="t" style="left:60.50px;top:634px;font-size:6.6px;color:#555;transform:scaleX(0.9281);">ABOUT 1301 WORDS</div>
<div class="t" style="left:133.00px;top:634px;font-size:6.6px;color:#555;transform:scaleX(0.8743);">ENGLISH (U.S.)</div>
<div class="t" style="left:765.60px;top:634px;font-size:6.6px;color:#555;transform:scaleX(0.8803);">HELP IMPROVE OFFICE</div>
<!-- skype chat panel -->
<div class="r" style="left:838px;top:33.5px;width:181.3px;height:609.7px;background:#f2f2f2;"></div>
<svg style="left:1003.6px;top:40.6px" width="7" height="6.6" viewBox="0 0 7 6.6"><path d="M0.6 0.5l5.800 5.600M6.400 0.500L0.600 6.100" stroke="#333" stroke-width="1.400"/></svg>
<div class="r" style="left:856px;top:55px;width:37px;height:36.5px;background:#8b8b8b;"></div>
<svg style="left:856px;top:55px" width="37" height="36.5" viewBox="0 0 37 36.500"><g fill="#fff"><circle cx="18.500" cy="5.800" r="3.500"/><path d="M11.800 16.600v-3.200q0-3 3-3h7.400q3 0 3 3v3.200z"/><circle cx="9.800" cy="22.600" r="3.600"/><path d="M2.400 34.600v-4q0-3.400 3.400-3.400h8q3.400 0 3.400 3.400v4z"/><circle cx="27.200" cy="22.600" r="3.600"/><path d="M19.800 34.600v-4q0-3.400 3.400-3.400h8q3.400 0 3.400 3.400v4z"/></g></svg>
<div class="t" style="left:899.00px;top:55px;font-size:13.4px;color:#686868;transform:scaleX(0.8900);">Lab report1</div>
<div class="t" style="left:899.00px;top:74px;font-size:8px;color:#444;transform:scaleX(0.9448);">2 people</div>
<svg style="left:931.4px;top:75.2px" width="5.400" height="4" viewBox="0 0 5.400 4"><path d="M0.500 0.600l2.200 2.400 2.200-2.400" fill="none" stroke="#444" stroke-width="0.9"/></svg>
<div class="t" style="left:856.50px;top:106px;font-size:7.8px;color:#666;transform:scaleX(0.9279);">Today on Skype</div>
<div class="t" style="left:856.50px;top:121px;font-size:7.8px;color:#777;transform:scaleX(0.9443);">You joined this conversation.</div>
<div class="r" style="left:856px;top:134.7px;width:148.5px;height:56.8px;background:#0c47b7;"></div>
<svg style="left:851px;top:144px" width="5.500" height="6" viewBox="0 0 5.500 6"><path d="M0 0h5.500v6z" fill="#0c47b7"/></svg>
<div class="t" style="left:948.00px;top:140px;font-size:7.4px;color:#c9d8f3;transform:scaleX(0.9802);">Andru Roysden</div>
<div class="t" style="left:863.00px;top:152px;font-size:8.4px;color:#fff;font-weight:bold;transform:scaleX(0.9693);">Hey Nelson, Did you get the data I</div>
<div class="t" style="left:863.00px;top:164px;font-size:8.4px;color:#fff;font-weight:bold;transform:scaleX(0.9561);">e-mailed you?</div>
<div class="t" style="left:971.00px;top:177px;font-size:7.4px;color:#c9d8f3;transform:scaleX(0.9797);">4:05 PM</div>
<div class="r" style="left:856px;top:198px;width:147px;height:90.5px;background:#d6d6d6;"></div>
<svg style="left:1003px;top:206.6px" width="6" height="6" viewBox="0 0 6 6"><path d="M0 0h6L0 6z" fill="#d6d6d6"/></svg>
<div class="t" style="left:863.00px;top:202px;font-size:8.6px;color:#3a3a3a;transform:scaleX(1.0013);">Hey Andru, yeah I got it. Did you</div>
<div class="t" style="left:863.00px;top:214px;font-size:8.6px;color:#3a3a3a;transform:scaleX(1.0217);">want to work on it together now?</div>
<div class="t" style="left:863.00px;top:227px;font-size:8.6px;color:#3a3a3a;transform:scaleX(1.0310);">I&#x27;ll start importing the data into</div>
<div class="t" style="left:863.00px;top:239px;font-size:8.6px;color:#3a3a3a;transform:scaleX(0.9837);">Excel and figure out the results.</div>
<div class="t" style="left:863.00px;top:251px;font-size:8.6px;color:#3a3a3a;transform:scaleX(1.0106);">You can start writing up our</div>
<div class="t" style="left:863.00px;top:263px;font-size:8.6px;color:#3a3a3a;transform:scaleX(0.9777);">procedures.</div>
<div class="t" style="left:971.00px;top:276px;font-size:7.4px;color:#8a8a8a;transform:scaleX(0.9616);">4:06 PM</div>
<svg style="left:992.6px;top:585.6px" width="11" height="11" viewBox="0 0 11 11"><circle cx="5.500" cy="5.500" r="4.700" fill="none" stroke="#444" stroke-width="0.9"/><circle cx="3.900" cy="4.200" r="0.700" fill="#444"/><circle cx="7.100" cy="4.200" r="0.700" fill="#444"/><path d="M3 6.200q2.500 3 5 0" fill="none" stroke="#444" stroke-width="0.9"/></svg>
<svg style="left:855px;top:601px" width="150" height="33" viewBox="855 601 150 33"><rect x="856.500" y="603" width="146" height="29" fill="#fdfdfd" stroke="#858585" stroke-width="1"/></svg>
</body></html>
